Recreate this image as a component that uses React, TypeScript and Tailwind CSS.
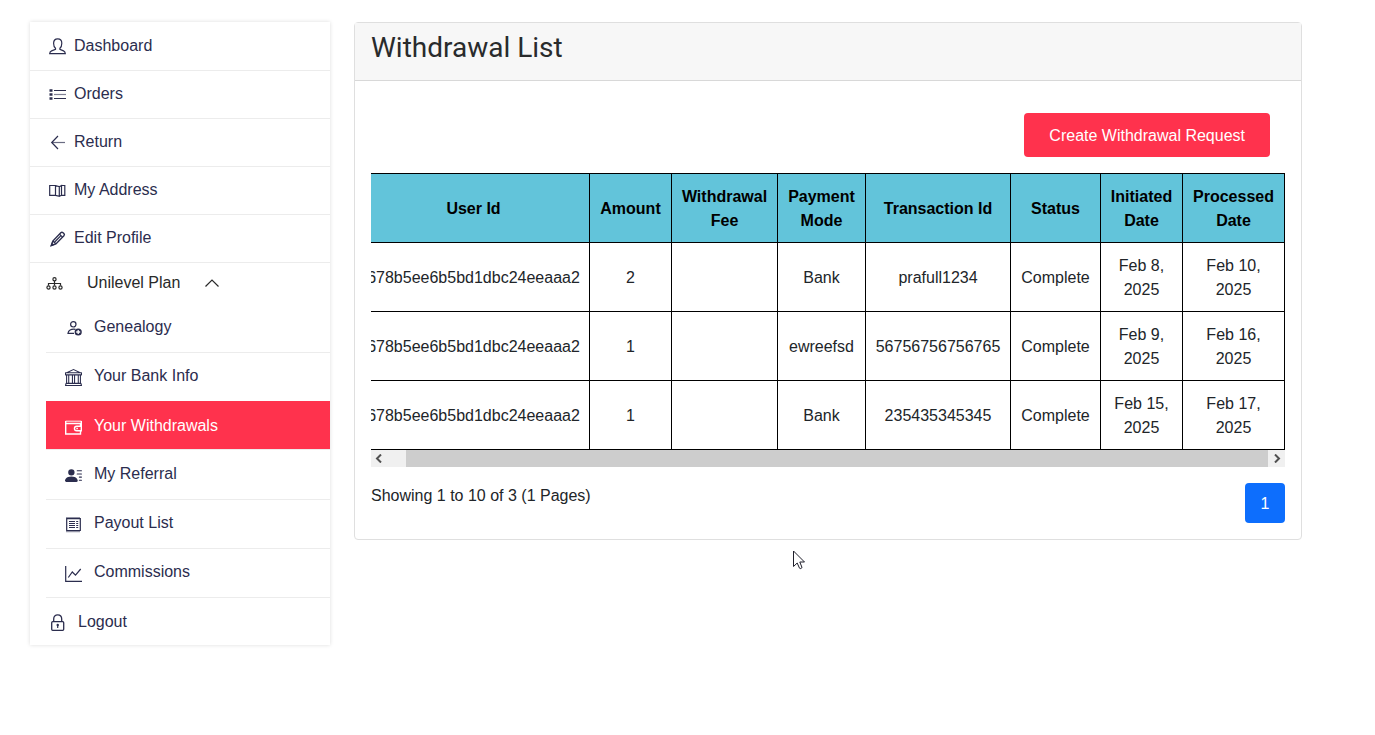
import type { ReactNode } from "react";
import { BsBank, BsPersonLinesFill } from "react-icons/bs";

interface MenuEntry {
  label: string;
  icon: ReactNode;
  active?: boolean;
}

const LineIcon = ({ children }: { children: ReactNode }) => (
  <svg
    width="17"
    height="17"
    viewBox="0 0 17 17"
    fill="none"
    stroke="currentColor"
    strokeWidth="1.200"
    aria-hidden="true"
  >
    {children}
  </svg>
);

const UserIcon = () => (
  <LineIcon>
    <path d="M6.500 10.200C5 9 4.600 7 4.600 5.200 4.600 2.400 6.200.9 8.700.9s4.100 1.500 4.100 4.300c0 1.800-.4 3.800-1.900 5v1.200l3.600 1.500c1.200.5 1.700 1.200 1.800 2.700H.7c.1-1.500.7-2.200 1.900-2.700l3.900-1.500z" />
  </LineIcon>
);

const ListIcon = () => (
  <LineIcon>
    <path d="M5 4.500h12M5 12.500h12" />
    <path d="M5 8.500h12" strokeOpacity=".6" />
    <path d="M.5 4.500h3M.5 8.500h3M.5 12.500h3" strokeWidth="2.600" />
  </LineIcon>
);

const ArrowLeftIcon = () => (
  <LineIcon>
    <path d="M9 2 2.700 8.500 9 15" />
    <path d="M3 8.500h13" strokeOpacity=".7" />
  </LineIcon>
);

const MapIcon = () => (
  <LineIcon>
    <path d="M.7 3.500h5.800v9.800H.7zM6.500 3.500l3.800 1.300v9.500l-3.800-1M10.300 4.800l2.200-1.300v9.800l-2.200 1M12.500 3.500h3.300v9.800h-3.300" />
  </LineIcon>
);

const PencilIcon = () => (
  <LineIcon>
    <path d="M2.300 15.500 3.800 11l8-8.200c.7-.7 1.500-.7 2.200-.1l.9.900c.7.7.6 1.500 0 2.200l-8 8.100z" strokeWidth="1.400" />
    <path d="m10.500 4.200 3 3M3.800 11l3 2.800M5.700 12l6-6.100M2.300 15.500l2-.7-1.300-1.300z" />
  </LineIcon>
);

const SitemapIcon = () => (
  <svg width="17" height="13" viewBox="0 0 17 13" fill="none" stroke="currentColor" strokeWidth="1.200" aria-hidden="true">
    <circle cx="8.500" cy="2.300" r="1.600" />
    <path d="M8.500 4v4.500M2.500 8.500v-2h12v2" />
    <circle cx="2.500" cy="10.500" r="1.600" />
    <circle cx="8.500" cy="10.500" r="1.600" />
    <circle cx="14.500" cy="10.500" r="1.600" />
  </svg>
);

const PersonAddIcon = () => (
  <LineIcon>
    <circle cx="8.300" cy="4.300" r="2.700" />
    <path d="M10.500 9.300C6 8.600 3.200 10.500 3 13.300h6" />
    <circle cx="13.200" cy="12" r="3.600" fill="currentColor" stroke="none" />
    <path d="M11.200 12h4M13.200 10v4" stroke="#fff" strokeWidth="1.300" />
  </LineIcon>
);

const WalletIcon = () => (
  <LineIcon>
    <path d="M.7 2.200h15.600" strokeOpacity=".8" />
    <path d="M.7 2v13h14.800v-3.200M.7 4.500h14.800v2.700" strokeWidth="1.400" />
    <path d="M16.300 2v5.300h-4.600c-3 0-3 4.400 0 4.400h4.600V7.300" strokeWidth="1.400" />
    <path d="M11.300 9.500h1.600" strokeWidth="1.400" />
  </LineIcon>
);

const ReceiptIcon = () => (
  <LineIcon>
    <path d="M1.700 2v13M15.300 2v13" />
    <path d="M1.500 1.500h14M1.500 15.700h14" strokeDasharray="1 1" />
    <path d="M2 2.600h13M2 14.500h13" />
    <path d="M4 5.500h6M4 7.500h6M4 9.500h6M4 11.500h6M11.200 5.500h2M11.200 7.500h2M11.200 9.500h2M11.200 11.500h2" />
  </LineIcon>
);

const GraphIcon = () => (
  <LineIcon>
    <path d="M.7 1v15.300H17" />
    <path d="m3.300 12.500 4-5.500 3.200 3.200L15.700 4" />
  </LineIcon>
);

const LockIcon = () => (
  <LineIcon>
    <rect x="2.700" y="7.700" width="12" height="8.600" rx="1" strokeWidth="1.300" />
    <path d="M4.700 7.500V5c0-2.600 1.600-4.200 4-4.200s4 1.600 4 4.200v2.500" strokeWidth="1.300" />
    <circle cx="8.700" cy="11" r="1.200" fill="currentColor" stroke="none" />
    <path d="M8.700 11v3" />
  </LineIcon>
);

const ChevronUpIcon = () => (
  <svg width="14" height="8" viewBox="0 0 14 8" fill="none" stroke="currentColor" strokeWidth="1.200" aria-hidden="true">
    <path d="M.5 7.500 7 1l6.500 6.500" />
  </svg>
);

const mainMenu: MenuEntry[] = [
  { label: "Dashboard", icon: <UserIcon /> },
  { label: "Orders", icon: <ListIcon /> },
  { label: "Return", icon: <ArrowLeftIcon /> },
  { label: "My Address", icon: <MapIcon /> },
  { label: "Edit Profile", icon: <PencilIcon /> },
];

const planMenu: MenuEntry[] = [
  { label: "Genealogy", icon: <PersonAddIcon /> },
  { label: "Your Bank Info", icon: <BsBank size={17} /> },
  { label: "Your Withdrawals", icon: <WalletIcon />, active: true },
  { label: "My Referral", icon: <BsPersonLinesFill size={17} /> },
  { label: "Payout List", icon: <ReceiptIcon /> },
  { label: "Commissions", icon: <GraphIcon /> },
];

const columns = [
  { title: "User Id", width: "" },
  { title: "Amount", width: "w-[82px]" },
  { title: "Withdrawal Fee", width: "w-[106px]" },
  { title: "Payment Mode", width: "w-[88px]" },
  { title: "Transaction Id", width: "w-[145px]" },
  { title: "Status", width: "w-[90px]" },
  { title: "Initiated Date", width: "w-[82px]" },
  { title: "Processed Date", width: "w-[102px]" },
];

const rows = [
  ["678b5ee6b5bd1dbc24eeaaa2", "2", "", "Bank", "prafull1234", "Complete", "Feb 8, 2025", "Feb 10, 2025"],
  ["678b5ee6b5bd1dbc24eeaaa2", "1", "", "ewreefsd", "56756756756765", "Complete", "Feb 9, 2025", "Feb 16, 2025"],
  ["678b5ee6b5bd1dbc24eeaaa2", "1", "", "Bank", "235435345345", "Complete", "Feb 15, 2025", "Feb 17, 2025"],
];

function Sidebar() {
  return (
    <nav className="w-[300px] shrink-0 bg-white pt-px text-[#2b2d4e] shadow-[0_0_4px_rgba(0,0,0,0.14)]">
      <ul>
        {mainMenu.map((item) => (
          <li key={item.label} className="border-b border-[#ececec]">
            <a href="#" className="flex h-[47px] items-center gap-2 pb-0.5 pl-[19px]">
              <span className="pt-0.5">{item.icon}</span>
              {item.label}
            </a>
          </li>
        ))}
      </ul>

      <button
        type="button"
        aria-expanded="true"
        className="mb-px flex h-10 w-full items-center pl-4 text-[#292929]"
      >
        <SitemapIcon />
        <span className="ml-6">Unilevel Plan</span>
        <span className="ml-[25px]">
          <ChevronUpIcon />
        </span>
      </button>

      <ul className="pl-4">
        {planMenu.map((item) => (
          <li
            key={item.label}
            className={
              item.active
                ? "-mt-px mb-px border-b border-[#ececec] bg-[#ff324d] text-white"
                : "border-b border-[#ececec]"
            }
          >
            <a
              href="#"
              className={`flex h-12 items-center gap-3 pl-[19px] ${item.active ? "pt-0.5" : "pb-0.5"}`}
            >
              <span className="pt-0.5">{item.icon}</span>
              {item.label}
            </a>
          </li>
        ))}
      </ul>

      <a href="#" className="flex h-[47px] items-center gap-3 pl-[19px]">
        <span className="pt-0.5">
          <LockIcon />
        </span>
        Logout
      </a>
    </nav>
  );
}

function WithdrawalTable() {
  return (
    <div className="flex justify-end overflow-hidden">
      <table className="w-[calc(100%+14px)] min-w-[928px] shrink-0 table-fixed border-collapse text-center">
        <thead>
          <tr className="bg-[#62c4da] text-black">
            {columns.map((column) => (
              <th
                key={column.title}
                className={`${column.width} border border-black px-2 pt-[11px] pb-[9px] font-bold`}
              >
                {column.title}
              </th>
            ))}
          </tr>
        </thead>
        <tbody>
          {rows.map((row, i) => (
            <tr key={i}>
              {row.map((cell, j) => (
                <td key={j} className="border border-black px-2 pt-[11px] pb-[9px]">
                  {cell}
                </td>
              ))}
            </tr>
          ))}
        </tbody>
      </table>
    </div>
  );
}

function ScrollBar() {
  return (
    <div className="flex h-[17px] bg-[#f0f0f0] text-[#505050]">
      <button type="button" aria-label="Scroll left" className="flex w-4 items-center justify-center">
        <svg width="8" height="9" viewBox="0 0 8 9" fill="none" stroke="currentColor" strokeWidth="2">
          <path d="M6 .5 2 4.500l4 4" />
        </svg>
      </button>
      <div className="ml-[19px] flex-1 bg-[#cdcdcd]" />
      <button type="button" aria-label="Scroll right" className="flex w-[17px] items-center justify-center">
        <svg width="8" height="9" viewBox="0 0 8 9" fill="none" stroke="currentColor" strokeWidth="2">
          <path d="m2 .5 4 4-4 4" />
        </svg>
      </button>
    </div>
  );
}

export default function App() {
  return (
    <div className="relative flex min-h-screen items-start gap-6 bg-white pt-[22px] pr-[73px] pl-[30px] font-['Liberation_Sans',Arial,sans-serif] text-base text-[#212529]">
      <Sidebar />

      <main className="min-w-0 flex-1 rounded border border-[#dfdfdf] bg-white">
        <div className="border-b border-[#d8d8d8] bg-[#f7f7f7] px-4 pt-2 pb-4">
          <h3 className="font-['Roboto',sans-serif] text-[28px] leading-[33px] text-[#292b2c]">
            Withdrawal List
          </h3>
        </div>

        <div className="p-4">
          <div className="flex justify-end py-4 pr-[15px]">
            <button type="button" className="h-11 rounded bg-[#ff324d] px-[25px] pt-0.5 text-white">
              Create Withdrawal Request
            </button>
          </div>

          <WithdrawalTable />
          <ScrollBar />

          <div className="mt-4 flex items-start justify-between">
            <p className="pt-px">Showing 1 to 10 of 3 (1 Pages)</p>
            <button type="button" aria-current="page" className="size-10 rounded bg-[#0d6efd] pt-0.5 text-white">
              1
            </button>
          </div>
        </div>
      </main>

      {/* mouse pointer */}
      <svg
        className="pointer-events-none absolute top-[550px] left-[793px]"
        width="12"
        height="20"
        viewBox="0 0 12 20"
        fill="#fff"
        stroke="#1f1f2b"
      >
        <path d="M.5 1v15.500l3.700-3.500 2.300 5.200c.8.900 2.600.200 2.400-1L6.800 12h4.700z" />
      </svg>
    </div>
  );
}
